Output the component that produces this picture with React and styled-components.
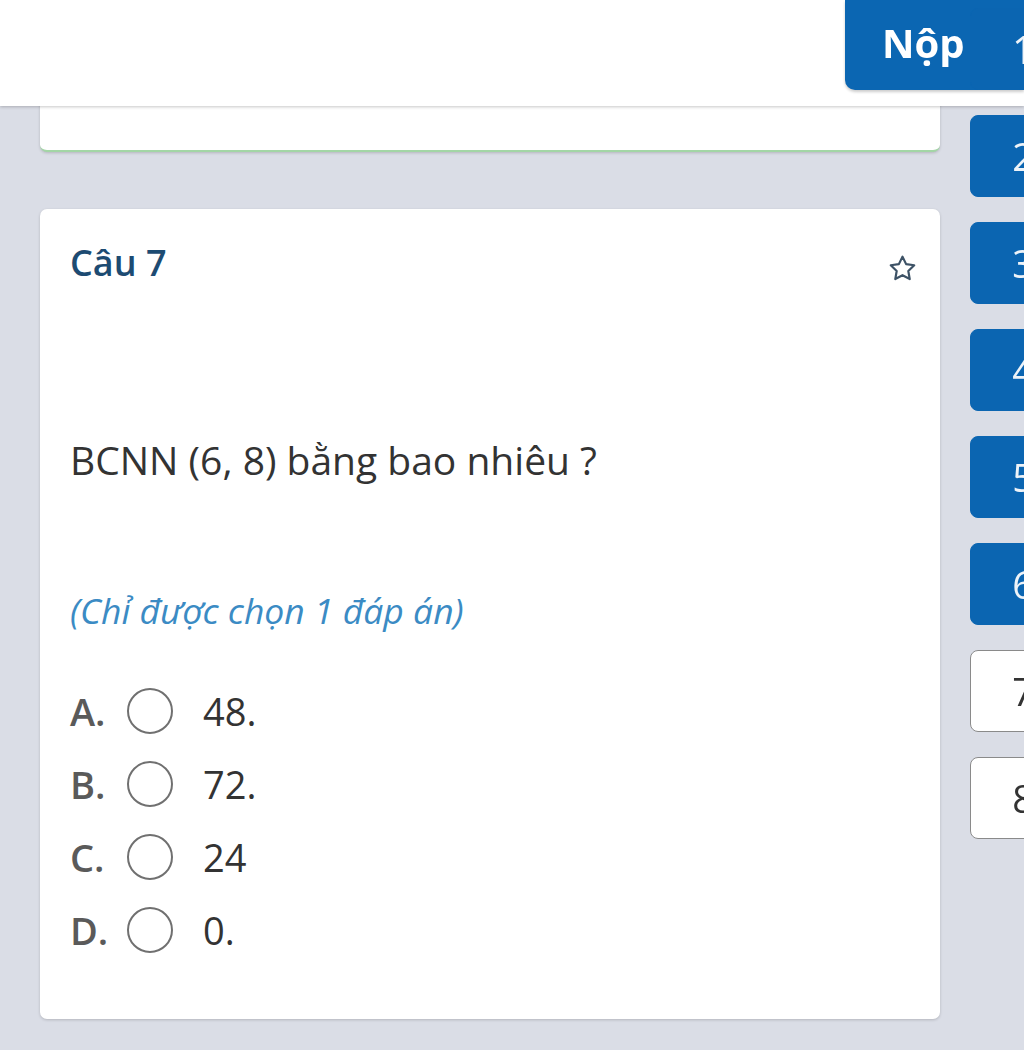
import React from "react";
import styled, { createGlobalStyle } from "styled-components";

const GlobalStyle = createGlobalStyle`
  html, body {
    margin: 0;
    padding: 0;
    overflow: hidden;
    background: #dadde6;
    font-family: "Open Sans", "Noto Sans", sans-serif;
  }
`;

const Page = styled.div`
  display: flex;
  align-items: flex-start;
  gap: 30px;
  padding-left: 40px;
  width: 1100px;
  height: 1050px;
  overflow: hidden;
`;

// thanh trắng phía trên, nằm đè lên nội dung
const Header = styled.header`
  position: fixed;
  top: 0;
  left: 0;
  right: 0;
  height: 106px;
  background: #ffffff;
  box-shadow: 0 1px 3px rgba(0, 0, 0, 0.22);
  z-index: 5;
  display: flex;
  justify-content: flex-end;
  align-items: flex-start;
`;

const SubmitButton = styled.button`
  width: 179px;
  height: 90px;
  border: none;
  border-radius: 0 0 0 10px;
  background: #0b66b2;
  color: #ffffff;
  font-family: "Open Sans", "Noto Sans", sans-serif;
  font-weight: 700;
  font-size: 40px;
  padding: 0 0 6px 37px;
  text-align: left;
  box-shadow: 0 2px 3px rgba(0, 0, 0, 0.2);
`;

const Main = styled.main`
  width: 900px;
  display: flex;
  flex-direction: column;
  gap: 57px;
`;

const Card = styled.section`
  background: #ffffff;
  border-radius: 7px;
  box-shadow: 0 1px 3px rgba(0, 0, 0, 0.18);
`;

const PrevCard = styled(Card)`
  height: 150px;
  border-bottom: 2px solid #a3d6a6;
`;

const QuestionCard = styled(Card)`
  height: 810px;
  box-sizing: border-box;
  padding: 36px 22px 0 30px;
  display: flex;
  flex-direction: column;
`;

const TitleRow = styled.div`
  display: flex;
  justify-content: space-between;
  align-items: center;
  height: 36px;
`;

const Title = styled.h2`
  margin: 0;
  font-size: 36px;
  line-height: 36px;
  font-weight: 600;
  color: #1d4b72;
`;

const StarBox = styled.span`
  display: flex;
  margin-top: 10px;
`;

const Question = styled.p`
  margin: 153px 0 0 0;
  font-size: 39px;
  line-height: 52px;
  color: #333333;
`;

const Note = styled.p`
  margin: 102px 0 0 0;
  font-size: 35.5px;
  line-height: 44px;
  font-style: italic;
  color: #3b8bc4;
`;

const Options = styled.div`
  margin-top: 42px;
  display: flex;
  flex-direction: column;
`;

const Option = styled.label`
  display: flex;
  align-items: center;
  height: 73px;
  font-size: 38px;
  color: #333333;
`;

const Letter = styled.span`
  width: 57px;
  font-weight: 600;
  color: #5a5a5a;
`;

const Radio = styled.span`
  width: 46px;
  height: 46px;
  box-sizing: border-box;
  border: 2.5px solid #707070;
  border-radius: 50%;
  margin-right: 30px;
  flex-shrink: 0;
`;

const Side = styled.nav`
  position: relative;
  z-index: 10;
  width: 106px;
  padding-top: 8px;
  display: flex;
  flex-direction: column;
  gap: 25px;
`;

const NumButton = styled.div`
  height: 82px;
  box-sizing: border-box;
  border-radius: 8px;
  display: flex;
  align-items: center;
  justify-content: center;
  font-size: 38px;
  background: ${(p) => (p.$done ? "#0b65b1" : "#ffffff")};
  color: ${(p) => (p.$done ? "#eef3f8" : "#333333")};
  border: 1.5px solid ${(p) => (p.$done ? "#0b65b1" : "#8a8a8a")};
`;

const Star = () => (
  <svg width="31" height="31" viewBox="0 0 24 24" fill="none" stroke="#3d5266" strokeWidth="1.7" strokeLinejoin="round">
    <path d="M12 2.8l2.8 5.8 6.3.9-4.6 4.4 1.1 6.3L12 17.2l-5.6 3 1.1-6.3-4.6-4.4 6.3-.9z" />
  </svg>
);

const options = [
  ["A.", "48."],
  ["B.", "72."],
  ["C.", "24"],
  ["D.", "0."],
];

const App = () => {
  return (
    <>
      <GlobalStyle />
      <Header>
        <SubmitButton>Nộp</SubmitButton>
      </Header>
      <Page>
        <Main>
          <PrevCard />
          <QuestionCard>
            <TitleRow>
              <Title>Câu 7</Title>
              <StarBox>
                <Star />
              </StarBox>
            </TitleRow>
            <Question>BCNN (6, 8) bằng bao nhiêu ?</Question>
            <Note>(Chỉ được chọn 1 đáp án)</Note>
            <Options>
              {options.map(([l, t]) => (
                <Option key={l}>
                  <Letter>{l}</Letter>
                  <Radio />
                  <span>{t}</span>
                </Option>
              ))}
            </Options>
          </QuestionCard>
        </Main>
        <Side>
          {[1, 2, 3, 4, 5, 6, 7, 8].map((n) => (
            <NumButton key={n} $done={n <= 6}>
              {n}
            </NumButton>
          ))}
        </Side>
      </Page>
    </>
  );
};

export default App;
